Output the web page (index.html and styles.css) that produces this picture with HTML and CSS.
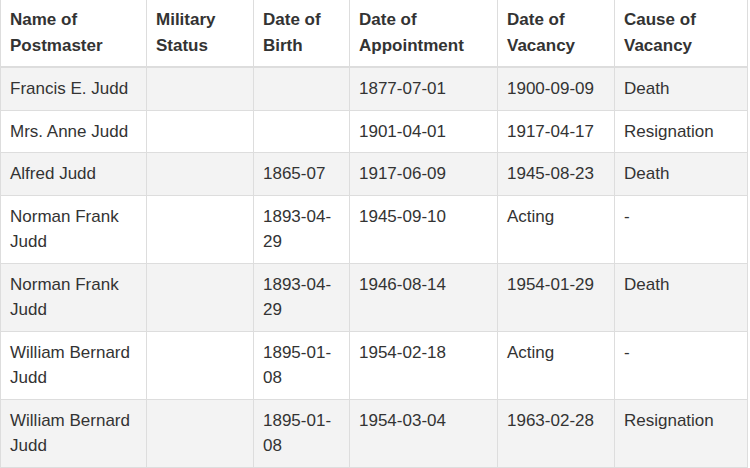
FILE: index.html
```html
<!DOCTYPE html>
<html>
<head>
<meta charset="utf-8">
<link rel="stylesheet" href="styles.css">
</head>
<body>
<table class="pm-table">
  <colgroup>
    <col class="c1"><col class="c2"><col class="c3"><col class="c4"><col class="c5"><col class="c6">
  </colgroup>
  <thead>
    <tr>
      <th>Name of Postmaster</th>
      <th>Military Status</th>
      <th>Date of Birth</th>
      <th>Date of Appointment</th>
      <th>Date of Vacancy</th>
      <th>Cause of Vacancy</th>
    </tr>
  </thead>
  <tbody>
    <tr><td>Francis E. Judd</td><td></td><td></td><td>1877-07-01</td><td>1900-09-09</td><td>Death</td></tr>
    <tr><td>Mrs. Anne Judd</td><td></td><td></td><td>1901-04-01</td><td>1917-04-17</td><td>Resignation</td></tr>
    <tr><td>Alfred Judd</td><td></td><td>1865-07</td><td>1917-06-09</td><td>1945-08-23</td><td>Death</td></tr>
    <tr><td>Norman Frank Judd</td><td></td><td>1893-04-29</td><td>1945-09-10</td><td>Acting</td><td>-</td></tr>
    <tr><td>Norman Frank Judd</td><td></td><td>1893-04-29</td><td>1946-08-14</td><td>1954-01-29</td><td>Death</td></tr>
    <tr><td>William Bernard Judd</td><td></td><td>1895-01-08</td><td>1954-02-18</td><td>Acting</td><td>-</td></tr>
    <tr><td>William Bernard Judd</td><td></td><td>1895-01-08</td><td>1954-03-04</td><td>1963-02-28</td><td>Resignation</td></tr>
  </tbody>
</table>
</body>
</html>
```
FILE: styles.css
```css
html, body {
  margin: 0;
  padding: 0;
  background: #ffffff;
}
body {
  font-family: "Liberation Sans", Arial, sans-serif;
  font-size: 17px;
  line-height: 1.5;
  color: #333333;
}
.pm-table {
  width: 747px;
  margin-top: -1px;
  border-collapse: collapse;
  border-spacing: 0;
  table-layout: fixed;
  border: 1px solid #dddddd;
}
.c1 { width: 146px; }
.c2 { width: 107px; }
.c3 { width: 96px; }
.c4 { width: 148px; }
.c5 { width: 117px; }
.c6 { width: 133px; }
.pm-table th,
.pm-table td {
  padding: 8px 9px;
  border: 1px solid #dddddd;
  text-align: left;
  vertical-align: top;
  word-wrap: break-word;
}
.pm-table th {
  padding-top: 7px;
  font-weight: bold;
  vertical-align: bottom;
  border-bottom-width: 2px;
}
.pm-table tbody tr:nth-child(odd) {
  background: #f3f3f3;
}
```
